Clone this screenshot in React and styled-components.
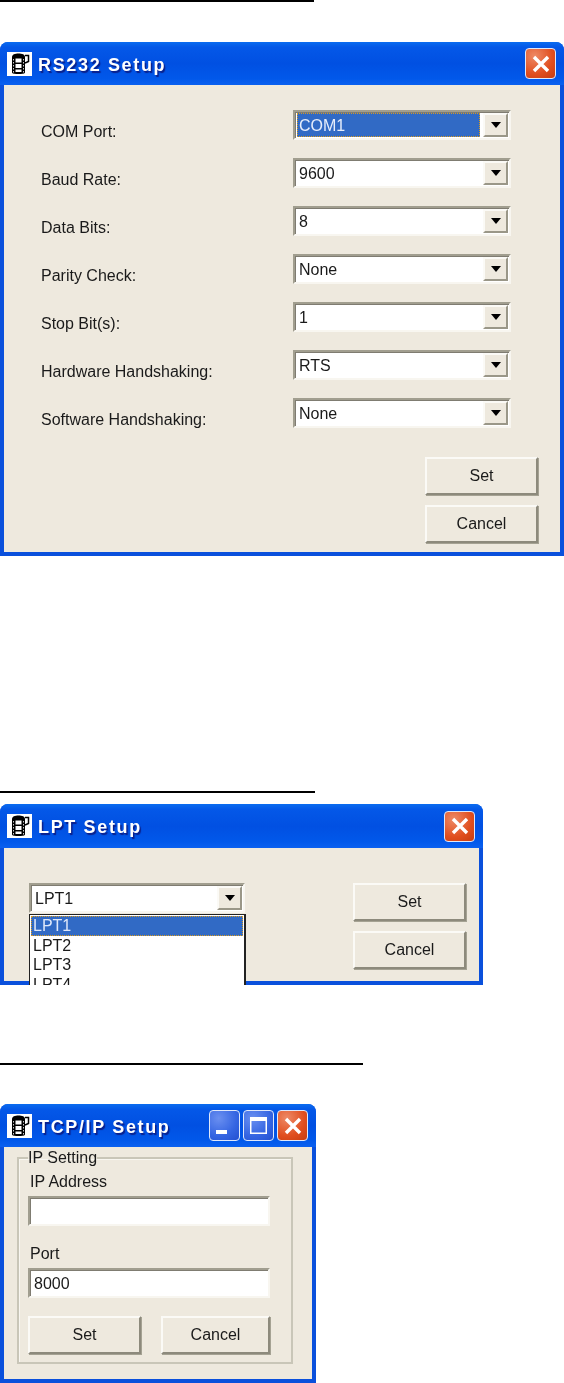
import React from 'react'
import styled, { createGlobalStyle } from 'styled-components'

const GlobalStyle = createGlobalStyle`
    html, body{
        margin: 0;
        background: #fff;
    }
    body{
        font-family: "Liberation Sans", Arial, sans-serif;
        font-size: 16px;
        color: #1a1a1a;
    }
`

const Page = styled.div`
    width: 564px;
    height: 1383px;
    overflow: hidden;
    display: flex;
    flex-direction: column;
`

const Rule = styled.div`
    width: ${p => p.$width}px;
    height: 2px;
    background: #000;
    margin-top: ${p => p.$top}px;
    margin-bottom: ${p => p.$bottom}px;
    flex: none;
`

const Window = styled.section`
    width: ${p => p.$width}px;
    height: ${p => p.$height}px;
    flex: none;
    display: flex;
    flex-direction: column;
    overflow: hidden;
    border-radius: 8px 8px 0 0;
    background: #0a50dc;
    filter: blur(.5px);
`

const TitleBar = styled.header`
    height: ${p => p.$height}px;
    flex: none;
    display: flex;
    align-items: center;
    padding: 0 8px 0 7px;
    gap: 6px;
    background: linear-gradient(180deg, #0a6cf0 0%, #0458e8 12%, #0150e2 50%, #0158ea 85%, #0a60f0 100%);
`

const TitleIcon = styled.svg`
    width: 25px;
    height: 24px;
    flex: none;
    background: #fff;
`

const TitleText = styled.h1`
    flex: 1;
    margin: 0;
    padding-top: 3px;
    color: #fff;
    font-size: 18px;
    font-weight: 700;
    letter-spacing: 1.65px;
    white-space: nowrap;
    text-shadow: 1.5px 1.5px 1px #0a1f8a;
`

const CaptionButtons = styled.div`
    display: flex;
    gap: 3px;
`

const CaptionButton = styled.div`
    width: 31px;
    height: 31px;
    box-sizing: border-box;
    display: flex;
    align-items: center;
    justify-content: center;
    border: 1px solid #dfe8fa;
    border-radius: 4px;
    background: ${p => p.$close
        ? 'radial-gradient(circle at 30% 25%, #ee8a66, #e04e1e 60%, #c63c10)'
        : 'radial-gradient(circle at 30% 25%, #6a8ff0, #3565e2 60%, #2350d0)'};
`

const Body = styled.div`
    flex: 1;
    min-height: 0;
    margin: 0 4px 4px;
    background: #eee9de;
    display: flex;
    flex-direction: column;
`

const SetupForm = styled.div`
    display: grid;
    grid-template-columns: 252px 218px;
    grid-auto-rows: 30px;
    row-gap: 18px;
    padding: 25px 0 0 37px;
`

const RowLabel = styled.span`
    font-size: 16px;
    line-height: 30px;
    transform: translateY(7px);
`

const Field = styled.div`
    position: relative;
    box-sizing: border-box;
    width: ${p => p.$width}px;
    height: 30px;
    display: flex;
    align-items: center;
    background: #fff;
    border: 2px solid;
    border-color: #a19e8f #f8f6f0 #f8f6f0 #a19e8f;
    box-shadow: inset 1px 1px 0 #7f7c71;
`

const FieldValue = styled.div`
    flex: 1;
    align-self: stretch;
    display: flex;
    align-items: center;
    margin: 1px 0 1px 2px;
    padding: 1px 0 0 2px;
    font-size: 16px;
    ${p => p.$selected && `
        background: #316ac5;
        color: #e6edfb;
        outline: 1px dotted #d89a20;
        outline-offset: -1px;
    `}
`

const ArrowButton = styled.div`
    width: 25px;
    align-self: stretch;
    box-sizing: border-box;
    margin: 1px 1px 1px 3px;
    display: flex;
    align-items: center;
    justify-content: center;
    background: #eee9de;
    border: 2px solid;
    border-color: #fbfaf6 #9a9788 #9a9788 #fbfaf6;

    &::after{
        content: "";
        border-style: solid;
        border-width: 6px 5.5px 0;
        border-color: #000 transparent transparent;
    }
`

const DropList = styled.ul`
    position: absolute;
    top: 29px;
    left: -2px;
    width: 217px;
    box-sizing: border-box;
    height: 100px;
    margin: 0;
    padding: 1px;
    list-style: none;
    background: #fff;
    border: 1px solid #222;
    border-right-width: 2px;
    z-index: 2;
`

const DropItem = styled.li`
    height: 19.5px;
    padding-left: 2px;
    font-size: 16px;
    line-height: 20px;
    ${p => p.$selected && `
        background: #316ac5;
        color: #dfe8fa;
        outline: 1px dotted #d89a20;
        outline-offset: -1px;
    `}
`

const PushButton = styled.button`
    width: ${p => p.$width}px;
    height: 38px;
    box-sizing: border-box;
    padding: 0;
    font-family: inherit;
    font-size: 16px;
    color: #1a1a1a;
    background: #eee9de;
    border: 2px solid;
    border-color: #fbfaf6 #8d8a7c #8d8a7c #fbfaf6;
    box-shadow: 1px 1px 0 #a5a293;
`

const ButtonStack = styled.div`
    display: flex;
    flex-direction: column;
    align-items: flex-end;
    gap: 10px;
    padding-right: ${p => p.$right || 0}px;
    margin-top: ${p => p.$top || 0}px;
`

const LptRow = styled.div`
    display: flex;
    justify-content: space-between;
    align-items: flex-start;
    padding: 35px 0 0 25px;
`

const GroupBox = styled.fieldset`
    margin: 0 0 0 13px;
    width: 276px;
    height: 217px;
    box-sizing: border-box;
    padding: 0 0 0 9px;
    border: 2px solid #c9c6b8;
    box-shadow: inset 1px 1px 0 #f8f6f0;
`

const GroupLegend = styled.legend`
    margin-left: 0;
    padding: 0;
    height: 22px;
    line-height: 22px;
    font-size: 16px;
`

const FieldLabel = styled.label`
    display: block;
    font-size: 16px;
    line-height: 20px;
    padding-left: 2px;
    margin-top: ${p => p.$top}px;
    margin-bottom: 4px;
`

const ButtonRow = styled.div`
    display: flex;
    gap: 20px;
    margin-top: 18px;
`

const rows = [
    ['COM Port:', 'COM1'],
    ['Baud Rate:', '9600'],
    ['Data Bits:', '8'],
    ['Parity Check:', 'None'],
    ['Stop Bit(s):', '1'],
    ['Hardware Handshaking:', 'RTS'],
    ['Software Handshaking:', 'None'],
]

function FilmIcon() {
    return (
        <TitleIcon viewBox="0 0 25 24">
            <path d="M5 5c0-2.500 3-3.500 6.500-3.500S18 2.500 18 5v15.500c0 1-3 1.500-6.500 1.500S5 21.500 5 20.500z" fill="#000" />
            <path d="M8.500 6.500h6v4h-6zM8.500 12h6v4h-6zM8.500 17.500h6V20h-6z" fill="#fff" />
            <path d="M6.500 7v14M16.500 7v14" stroke="#fff" strokeWidth=".8" strokeDasharray="1.500 1.500" />
            <path d="M18 3.500h3.500v6L18 11" fill="none" stroke="#000" strokeWidth="1.500" />
        </TitleIcon>
    )
}

function CloseGlyph() {
    return (
        <svg width="18" height="18" viewBox="0 0 18 18">
            <path d="M2 2l14 14M16 2L2 16" stroke="#fff" strokeWidth="3.400" />
        </svg>
    )
}

function Combo({ value, selected, width = 218, children }) {
    return (
        <Field $width={width}>
            <FieldValue $selected={selected}>{value}</FieldValue>
            <ArrowButton />
            {children}
        </Field>
    )
}

export default function App() {
    return (
        <>
            <GlobalStyle />
            <Page>
                <Rule $width={314} $top={0} $bottom={40} />
                <Window $width={564} $height={514}>
                    <TitleBar $height={43}>
                        <FilmIcon />
                        <TitleText>RS232 Setup</TitleText>
                        <CaptionButton $close><CloseGlyph /></CaptionButton>
                    </TitleBar>
                    <Body>
                        <SetupForm>
                            {rows.map(([label, value], i) => (
                                <React.Fragment key={label}>
                                    <RowLabel>{label}</RowLabel>
                                    <Combo value={value} selected={i === 0} />
                                </React.Fragment>
                            ))}
                        </SetupForm>
                        <ButtonStack $right={22} $top={29}>
                            <PushButton $width={113}>Set</PushButton>
                            <PushButton $width={113}>Cancel</PushButton>
                        </ButtonStack>
                    </Body>
                </Window>

                <Rule $width={315} $top={235} $bottom={11} />
                <Window $width={483} $height={181}>
                    <TitleBar $height={44}>
                        <FilmIcon />
                        <TitleText>LPT Setup</TitleText>
                        <CaptionButton $close><CloseGlyph /></CaptionButton>
                    </TitleBar>
                    <Body>
                        <LptRow>
                            <Combo value="LPT1" width={216}>
                                <DropList>
                                    <DropItem $selected>LPT1</DropItem>
                                    <DropItem>LPT2</DropItem>
                                    <DropItem>LPT3</DropItem>
                                    <DropItem>LPT4</DropItem>
                                </DropList>
                            </Combo>
                            <ButtonStack $right={13}>
                                <PushButton $width={113}>Set</PushButton>
                                <PushButton $width={113}>Cancel</PushButton>
                            </ButtonStack>
                        </LptRow>
                    </Body>
                </Window>

                <Rule $width={363} $top={78} $bottom={39} />
                <Window $width={316} $height={279}>
                    <TitleBar $height={43}>
                        <FilmIcon />
                        <TitleText>TCP/IP Setup</TitleText>
                        <CaptionButtons>
                            <CaptionButton>
                                <svg width="21" height="21" viewBox="0 0 21 21"><path d="M2 15h11v4H2z" fill="#fff" /></svg>
                            </CaptionButton>
                            <CaptionButton>
                                <svg width="21" height="21" viewBox="0 0 21 21"><path d="M2 2h17v17H2zM3.500 6v11.500h14V6z" fill="#fff" fillRule="evenodd" /></svg>
                            </CaptionButton>
                            <CaptionButton $close><CloseGlyph /></CaptionButton>
                        </CaptionButtons>
                    </TitleBar>
                    <Body>
                        <GroupBox>
                            <GroupLegend>IP Setting</GroupLegend>
                            <FieldLabel $top={3}>IP Address</FieldLabel>
                            <Field $width={242} />
                            <FieldLabel $top={18}>Port</FieldLabel>
                            <Field $width={242}>
                                <FieldValue>8000</FieldValue>
                            </Field>
                            <ButtonRow>
                                <PushButton $width={113}>Set</PushButton>
                                <PushButton $width={109}>Cancel</PushButton>
                            </ButtonRow>
                        </GroupBox>
                    </Body>
                </Window>
            </Page>
        </>
    )
}
